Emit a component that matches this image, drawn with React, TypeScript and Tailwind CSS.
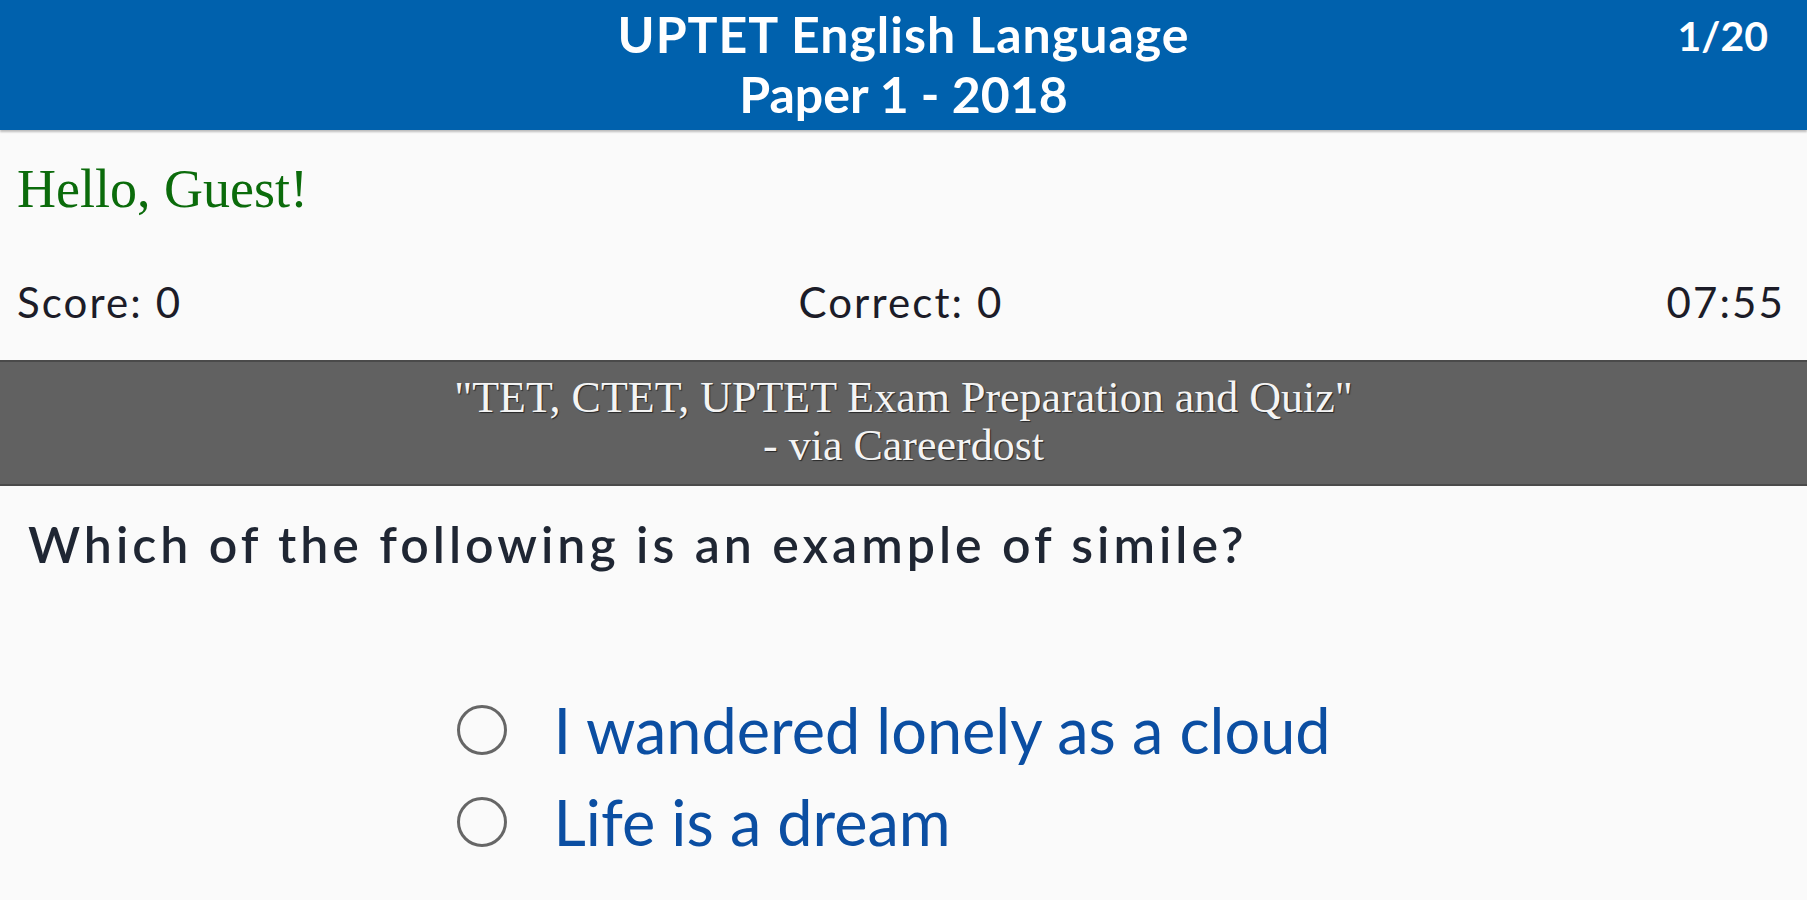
import React from "react";

const sans = { fontFamily: "Lato, 'Open Sans', sans-serif" };

export default function App() {
  const options = ["I wandered lonely as a cloud", "Life is a dream"];
  return (
    <div className="min-h-[900px] w-full bg-[#fafafa] overflow-hidden" style={sans}>
      <header className="grid h-[130px] grid-cols-[1fr_auto_1fr] bg-[#0061ad] pt-[4px] shadow-[0_2px_2px_rgba(0,0,0,0.25)]">
        <div />
        <div className="text-center text-[50px] font-bold leading-[60px] text-white">
          <div className="tracking-[0.02em]">UPTET English Language</div>
          <div>Paper 1 - 2018</div>
        </div>
        <div className="justify-self-end pr-[39px] pt-[8px] text-[41px] font-bold leading-[48px] text-white">
          1/20
        </div>
      </header>

      <div className="px-[17px] pt-[29px] text-[54px] leading-[60px] text-[#0b6b0b] [font-family:'Liberation_Serif',serif]">
        Hello, Guest!
      </div>

      <div className="mt-[59px] grid grid-cols-3 pl-[17px] pr-[22px] text-[42px] leading-[48px] tracking-[0.05em] text-[#1c1c28]">
        <span className="justify-self-start">Score: 0</span>
        <span className="justify-self-center">Correct: 0</span>
        <span className="justify-self-end">07:55</span>
      </div>

      <div className="mt-[34px] h-[126px] border-y-2 border-[#4a4a4a] bg-[#616161] pt-[12px] text-center text-[44px] leading-[48px] text-[#f4f4f4] [font-family:'Liberation_Serif',serif] [text-shadow:1px_1px_1px_rgba(0,0,0,0.6)]">
        <div>"TET, CTET, UPTET Exam Preparation and Quiz"</div>
        <div>- via Careerdost</div>
      </div>

      <div className="pl-[28px] pt-[28px] text-[50px] font-semibold leading-[60px] tracking-[0.08em] text-[#1f2633]">
        Which of the following is an example of simile?
      </div>

      <div className="mt-[131px] flex justify-center pr-[19px]">
        <div className="flex flex-col gap-[42px]">
          {options.map((o) => (
            <label key={o} className="flex items-center gap-[46px]">
              <span className="h-[50px] w-[50px] shrink-0 rounded-full border-[3px] border-[#666666]" />
              <span className="text-[63px] leading-[50px] text-[#0b4ea2]">{o}</span>
            </label>
          ))}
        </div>
      </div>
    </div>
  );
}
